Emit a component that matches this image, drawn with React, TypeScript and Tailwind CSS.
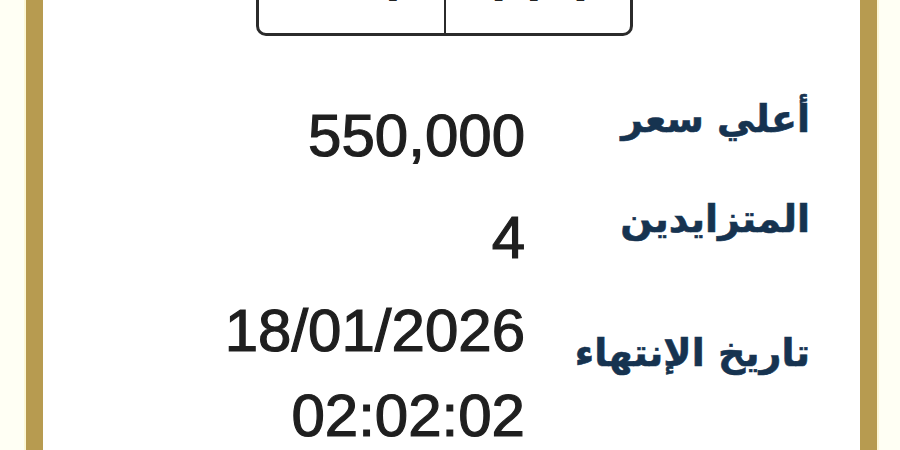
export default function App() {
  return (
    <div className="h-[450px] w-[900px] overflow-hidden bg-[#fffff4] pl-[24px] pr-[21px]">
      <div className="h-full border-x-2 border-[#fdf8d6]">
        <div className="h-full border-x-[17px] border-[#b79b50] bg-white overflow-hidden">
          <div className="flex flex-col">
            {/* plate box, cut off at the top */}
            <div className="ml-[213px] mt-[-45px] flex h-[81px] w-[377px] rounded-b-[10px] border-[3px] border-[#2b2b2b] overflow-hidden">
              <div className="flex flex-1 items-end justify-center pb-[25px] font-['DejaVu_Sans',sans-serif] text-[44px] font-bold leading-none text-[#222]">
                <span className="ml-[80px]">١</span>
              </div>
              <div className="w-[2px] bg-[#2b2b2b]" />
              <div className="flex flex-1 items-end justify-center gap-[14px] pb-[25px] font-['DejaVu_Sans',sans-serif] text-[44px] font-bold leading-none text-[#222]">
                <span>١</span>
                <span>٢</span>
                <span>١</span>
              </div>
            </div>

            <div dir="rtl" className="mt-[57px] pr-[50px]">
              <Row label="أعلي سعر" labelPad="pt-[3px]" rowClass="h-[102px]">
                <div>550,000</div>
              </Row>
              <Row label="المتزايدين" labelPad="pt-[1px]" rowClass="h-[93px]">
                <div>4</div>
              </Row>
              <Row label="تاريخ الإنتهاء" labelPad="pt-[42px]" rowClass="h-[170px]">
                <div>18/01/2026</div>
                <div>02:02:02</div>
              </Row>
            </div>
          </div>
        </div>
      </div>
    </div>
  );
}

function Row({
  label,
  labelPad,
  rowClass,
  children,
}: {
  label: string;
  labelPad: string;
  rowClass: string;
  children: React.ReactNode;
}) {
  return (
    <div className={`grid grid-cols-[268px_auto] gap-x-[17px] ${rowClass}`}>
      <div
        className={`${labelPad} whitespace-nowrap font-['DejaVu_Sans',sans-serif] text-[38px] font-bold leading-[46px] text-[#163350] [-webkit-text-stroke:0.6px_#163350]`}
      >
        {label}
      </div>
      <div className="font-['Liberation_Sans',Arial,sans-serif] text-[60px] leading-[85px] text-[#1f1f1f] [-webkit-text-stroke:1.2px_#1f1f1f]">
        {children}
      </div>
    </div>
  );
}
